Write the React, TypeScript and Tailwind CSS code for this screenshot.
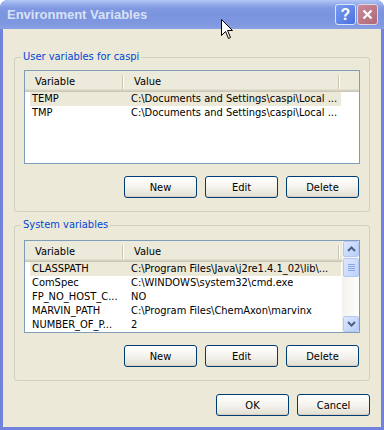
import React from "react";

type Row = [string, string];

const userVars: Row[] = [
  ["TEMP", "C:\\Documents and Settings\\caspi\\Local ..."],
  ["TMP", "C:\\Documents and Settings\\caspi\\Local ..."],
];

const systemVars: Row[] = [
  ["CLASSPATH", "C:\\Program Files\\Java\\j2re1.4.1_02\\lib\\..."],
  ["ComSpec", "C:\\WINDOWS\\system32\\cmd.exe"],
  ["FP_NO_HOST_C...", "NO"],
  ["MARVIN_PATH", "C:\\Program Files\\ChemAxon\\marvinx"],
  ["NUMBER_OF_P...", "2"],
];

function XpButton({ label }: { label: string }) {
  return (
    <button className="w-[73px] h-[22px] rounded-[3px] border border-[#003c74] bg-linear-to-b from-white via-[#f4f3ee] to-[#e2ded0] text-[11px] text-black leading-none flex items-center justify-center shadow-[inset_0_-1px_0_#d6d0c5]">
      {label}
    </button>
  );
}

function Header() {
  return (
    <div className="h-[21px] flex bg-[#ebeadb] shadow-[inset_0_-1px_0_#cbc7b8,inset_0_-2px_0_#d6d2c2,inset_0_-3px_0_#e2decd] text-[11px] text-black shrink-0">
      <div className="w-[99px] pl-[10px] flex items-center pt-[1px] relative">
        Variable
        <span className="absolute right-0 top-[4px] h-[14px] w-[2px] border-l border-[#c7c5b2] border-r border-r-white" />
      </div>
      <div className="w-[216px] pl-[10px] flex items-center pt-[1px] relative">
        Value
        <span className="absolute right-0 top-[4px] h-[14px] w-[2px] border-l border-[#c7c5b2] border-r border-r-white" />
      </div>
    </div>
  );
}

function Rows({ rows }: { rows: Row[] }) {
  return (
    <div className="flex flex-col pl-[5px]">
      {rows.map(([name, value], i) => (
        <div
          key={name}
          className={`h-[14px] w-[311px] flex items-center text-[11px] text-black whitespace-nowrap ${i === 0 ? "bg-[#ece9d8]" : ""}`}
        >
          <div className="w-[94px] pl-[2px] overflow-hidden">{name}</div>
          <div className="pl-[7px] overflow-hidden">{value}</div>
        </div>
      ))}
    </div>
  );
}

function ScrollBtn({ up }: { up: boolean }) {
  return (
    <div className="h-[16px] w-[16px] rounded-[2px] border border-[#b4c8f6] bg-linear-to-br from-[#dde8fe] to-[#b9cdfa] flex items-center justify-center">
      <svg width="9" height="6" viewBox="0 0 9 6">
        <path
          d={up ? "M1 5 L4.5 1.5 L8 5" : "M1 1 L4.5 4.5 L8 1"}
          stroke="#4d6185"
          strokeWidth="2"
          fill="none"
        />
      </svg>
    </div>
  );
}

function GroupBox({
  title,
  height,
  children,
}: {
  title: string;
  height: string;
  children: React.ReactNode;
}) {
  return (
    <div className={`relative border border-[#d0d0bf] rounded-[3px] px-[9px] pt-[12px] ${height}`}>
      <span className="absolute -top-[8px] left-[6px] px-[2px] bg-[#ece9d8] text-[11px] text-[#0046d5] leading-[14px]">
        {title}
      </span>
      {children}
      <div className="flex justify-end gap-[8px] pr-[1px] mt-[12px]">
        <XpButton label="New" />
        <XpButton label="Edit" />
        <XpButton label="Delete" />
      </div>
    </div>
  );
}

export default function App() {
  return (
    <div className="w-[384px] h-[430px] bg-white font-['DejaVu_Sans_Condensed','Liberation_Sans',sans-serif] relative">
      <div className="h-full flex flex-col rounded-t-[8px] overflow-hidden bg-[#7383dc]">
        {/* title bar */}
        <div className="h-[29px] shrink-0 flex items-center pl-[7px] pr-[6px] bg-[linear-gradient(to_bottom,#b4c6f4_0px,#9cb3ee_3px,#8199e2_8px,#7b94de_50%,#7f98e0_85%,#8aa1e4_100%)]">
          <span className="font-['Liberation_Sans',sans-serif] font-bold text-[13px] text-[#d8e2f6] pt-[1px]">
            Environment Variables
          </span>
          <div className="ml-auto flex gap-[1px]">
            <div className="w-[21px] h-[21px] rounded-[3px] border border-[#dbe5fb] bg-linear-to-br from-[#7a9cf0] to-[#4a70de] flex items-center justify-center text-white font-['Liberation_Sans',sans-serif] font-bold text-[16px] leading-none">
              ?
            </div>
            <div className="w-[21px] h-[21px] rounded-[3px] border border-[#e4d4dc] bg-linear-to-br from-[#c98a98] to-[#b0687a] flex items-center justify-center">
              <svg width="11" height="11" viewBox="0 0 11 11">
                <path d="M1.5 1.5 L9.5 9.5 M9.5 1.5 L1.5 9.5" stroke="white" strokeWidth="2.2" />
              </svg>
            </div>
          </div>
        </div>

        {/* body */}
        <div className="flex-1 mx-[3px] mb-[3px] bg-[#ece9d8] px-[11px] pt-[28px] flex flex-col">
          <GroupBox title="User variables for caspi" height="h-[155px]">
            <div className="h-[94px] border border-[#7f9db9] bg-white flex flex-col overflow-hidden">
              <Header />
              <Rows rows={userVars} />
            </div>
          </GroupBox>

          <div className="mt-[13px]">
            <GroupBox title="System variables" height="h-[156px]">
              <div className="mt-[2px] h-[93px] border border-[#7f9db9] bg-white flex overflow-hidden">
                <div className="flex-1 flex flex-col">
                  <Header />
                  <Rows rows={systemVars} />
                </div>
                <div className="w-[17px] flex flex-col justify-between bg-linear-to-r from-[#f3f1ec] to-[#fefefe] pl-[1px]">
                  <div className="flex flex-col gap-[1px]">
                    <ScrollBtn up />
                    <div className="h-[19px] w-[16px] rounded-[2px] border border-[#b4c8f6] bg-linear-to-br from-[#dde8fe] to-[#c0d2fb] flex flex-col items-center justify-center gap-[1px]">
                      <span className="w-[7px] h-px bg-[#8aa6e8]" />
                      <span className="w-[7px] h-px bg-[#8aa6e8]" />
                      <span className="w-[7px] h-px bg-[#8aa6e8]" />
                      <span className="w-[7px] h-px bg-[#8aa6e8]" />
                    </div>
                  </div>
                  <ScrollBtn up={false} />
                </div>
              </div>
            </GroupBox>
          </div>

          <div className="mt-[13px] flex justify-end gap-[8px]">
            <XpButton label="OK" />
            <XpButton label="Cancel" />
          </div>
        </div>
      </div>

      {/* mouse pointer */}
      <svg className="absolute left-[221px] top-[19px]" width="13" height="21" viewBox="0 0 13 21">
        <path
          d="M0.5 0.5 L0.5 16.5 L4.5 12.5 L7.5 19.5 L9.5 18.5 L6.5 11.5 L11.5 11.5 Z"
          fill="white"
          stroke="black"
          strokeWidth="1"
        />
      </svg>
    </div>
  );
}
